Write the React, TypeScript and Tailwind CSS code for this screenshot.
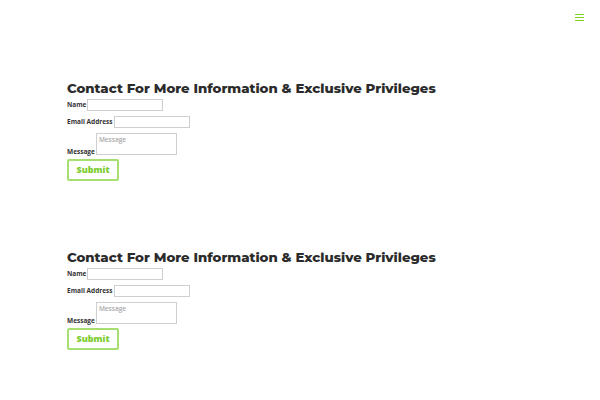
import React from "react";

function ContactForm() {
  return (
    <div className="flex flex-col items-start">
      <h2
        className="text-[13.3px] leading-[16px] font-extrabold text-[#2b2b2b]"
        style={{ fontFamily: "Montserrat, Inter, 'Liberation Sans', sans-serif" }}
      >
        Contact For More Information &amp; Exclusive Privileges
      </h2>
      <div className="mt-[3px] flex items-center gap-[1px] text-[6.5px] font-bold text-[#333]">
        <span>Name</span>
        <input className="w-[76px] h-[12px] border border-[#cfcfcf] bg-white" />
      </div>
      <div className="mt-[5px] flex items-center gap-[1px] text-[6.5px] font-bold text-[#333]">
        <span>Email Address</span>
        <input className="w-[76px] h-[12px] border border-[#cfcfcf] bg-white" />
      </div>
      <div className="mt-[5px] flex items-end gap-[1px] text-[6.5px] font-bold text-[#333]">
        <span className="leading-[8px] mb-[-1px]">Message</span>
        <textarea
          placeholder="Message"
          className="w-[81px] h-[22px] border border-[#cfcfcf] bg-white resize-none px-[2px] py-[1px] text-[6.5px] leading-[9px] font-semibold placeholder:text-[#aaa]"
        />
      </div>
      <button className="mt-[4px] w-[52px] h-[22px] border-2 border-[#a6df70] text-[#7ccd2f] text-[9px] font-extrabold rounded-[2px]">
        Submit
      </button>
    </div>
  );
}

export default function App() {
  return (
    <div
      className="w-[600px] h-[400px] bg-white flex flex-col"
      style={{ fontFamily: "'Open Sans', 'Liberation Sans', sans-serif" }}
    >
      <div className="flex justify-end pt-[14px] pr-[16px]">
        <div className="flex flex-col gap-[2px] w-[9px]">
          <div className="h-[1px] bg-[#7ed321]" />
          <div className="h-[1px] bg-[#7ed321]" />
          <div className="h-[1px] bg-[#7ed321]" />
        </div>
      </div>
      <div className="pl-[67px] pt-[59px]">
        <ContactForm />
      </div>
      <div className="pl-[67px] pt-[68px]">
        <ContactForm />
      </div>
    </div>
  );
}
